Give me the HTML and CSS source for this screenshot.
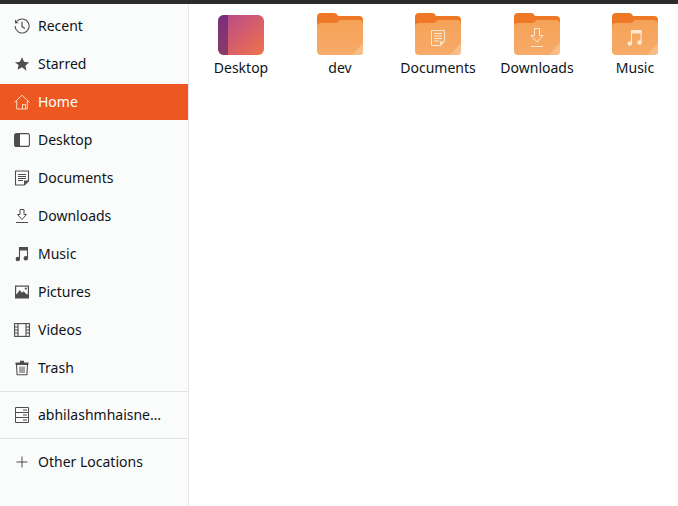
FILE: index.html
```html
<!DOCTYPE html>
<html lang="en">
<head>
<meta charset="utf-8">
<title>Files</title>
<link rel="stylesheet" href="styles.css">
</head>
<body>
<div class="topbar"></div>
<div class="window">
  <nav class="sidebar">
    <ul class="places">
      <li class="row"><svg class="ico" viewBox="0 0 16 16"><path d="M3 3.200A7 7 0 1 1 1.100 8" fill="none" stroke="#4d4d4d" stroke-width="1.100"/><path d="M1 1.600v3.600h3.600z" fill="#4d4d4d"/><path d="M8 3.800V8.600l3 1.800" fill="none" stroke="#4d4d4d" stroke-width="1.200"/></svg><span class="lbl">Recent</span></li>
      <li class="row"><svg class="ico" viewBox="0 0 16 16"><path d="M8 1.200l2.100 4.600 5 .6-3.700 3.400 1 5L8 11.300l-4.400 2.500 1-5L.9 6.400l5-.6z" fill="#4d4d4d"/></svg><span class="lbl">Starred</span></li>
      <li class="row active"><svg class="ico" viewBox="0 0 16 16"><path d="M.6 8.400L8 1.200l7.400 7.200M2.700 7v8h10.600V7M8.500 15v-4.500h3V15" fill="none" stroke="#fbd9c8" stroke-width="1"/></svg><span class="lbl">Home</span></li>
      <li class="row"><svg class="ico" viewBox="0 0 16 16"><rect x=".6" y="1.600" width="14.800" height="12.800" rx="2" fill="#fcfdfd" stroke="#4d4d4d" stroke-width="1.100"/><path d="M2.500 1.600h3.500v12.800H2.500a2 2 0 0 1-2-2V3.600a2 2 0 0 1 2-2z" fill="#4d4d4d"/></svg><span class="lbl">Desktop</span></li>
      <li class="row"><svg class="ico" viewBox="0 0 16 16"><path d="M1.500 1h13v10l-4 4h-9z" fill="none" stroke="#4d4d4d" stroke-width="1.100"/><path d="M4 4.500h8M4 6.500h8M4 8.500h8M4 10.500h5" stroke="#4d4d4d" stroke-width="1"/><path d="M10 15v-4.500h4.500z" fill="#4d4d4d"/></svg><span class="lbl">Documents</span></li>
      <li class="row"><svg class="ico" viewBox="0 0 16 16"><path d="M6 1.500h4v5h2.500L8 11.500 3.500 6.500H6z" fill="none" stroke="#4d4d4d" stroke-width="1"/><path d="M2 14.500h12" stroke="#4d4d4d" stroke-width="1"/></svg><span class="lbl">Downloads</span></li>
      <li class="row"><svg class="ico" viewBox="0 0 16 16"><path d="M5.500 12.500V3h8v9" fill="none" stroke="#4d4d4d" stroke-width="1.100"/><path d="M5 1h9v3.500H5z" fill="#4d4d4d"/><circle cx="3.800" cy="13" r="2.200" fill="#4d4d4d"/><circle cx="11.800" cy="12.300" r="2.200" fill="#4d4d4d"/></svg><span class="lbl">Music</span></li>
      <li class="row"><svg class="ico" viewBox="0 0 16 16"><rect x="1" y="1.500" width="14" height="13" fill="#4d4d4d"/><rect x="2.200" y="2.700" width="11.600" height="7.600" fill="#fcfdfd"/><path d="M2.200 11l3.500-5 2.300 2.700 1.500-1.500 3.800 3.800z" fill="#4d4d4d"/><circle cx="11.800" cy="4.600" r="1.100" fill="#4d4d4d"/></svg><span class="lbl">Pictures</span></li>
      <li class="row"><svg class="ico" viewBox="0 0 16 16"><rect x=".6" y="1.600" width="14.800" height="12.800" fill="none" stroke="#4d4d4d" stroke-width="1.100"/><path d="M4 1.600v12.800M12 1.600v12.800" stroke="#4d4d4d" stroke-width="1.100"/><path d="M.6 5h3.400M.6 8h3.400M.6 11h3.400M12 5h3.400M12 8h3.400M12 11h3.400" stroke="#4d4d4d" stroke-width="1"/></svg><span class="lbl">Videos</span></li>
      <li class="row"><svg class="ico" viewBox="0 0 16 16"><path d="M2.500 4.500l.6 10.200h9.800l.6-10.200z" fill="none" stroke="#4d4d4d" stroke-width="1.100"/><path d="M1.500 2.500h13v2h-13zM6 .8h4v2H6z" fill="#4d4d4d"/><path d="M6 6.500v6.500M8 6.500v6.500M10 6.500v6.500" stroke="#4d4d4d" stroke-width="1"/></svg><span class="lbl">Trash</span></li>
    </ul>
    <div class="mount">
      <div class="row"><svg class="ico" viewBox="0 0 16 16"><path d="M1.500 .5h13v5h-13zM1.500 5.500v5h13v-5M1.500 10.500v5h13v-5" fill="none" stroke="#4d4d4d" stroke-width="1"/><path d="M9 3h4M9 8h4M9 13h4" stroke="#4d4d4d" stroke-width="1"/></svg><span class="lbl">abhilashmhaisne…</span></div>
    </div>
    <div class="row other"><svg class="ico" viewBox="0 0 16 16"><path d="M8 2.500v11M2.500 8h11" stroke="#4d4d4d" stroke-width="1"/></svg><span class="lbl">Other Locations</span></div>
  </nav>
  <main class="grid">
    <figure class="item">
      <svg class="thumb desktop" viewBox="0 0 46 40"><defs><linearGradient id="dg" x1="0" y1="0" x2="1" y2="1"><stop offset="0" stop-color="#b5488f"/><stop offset="1" stop-color="#f0724a"/></linearGradient><linearGradient id="ds" x1="0" y1="0" x2="0" y2="1"><stop offset="0" stop-color="#7c2d7e"/><stop offset="1" stop-color="#8a3d66"/></linearGradient></defs><rect width="46" height="40" rx="6" fill="url(#dg)"/><path d="M6 0h4v40H6a6 6 0 0 1-6-6V6a6 6 0 0 1 6-6z" fill="url(#ds)"/></svg>
      <figcaption>Desktop</figcaption>
    </figure>
    <figure class="item">
      <svg class="thumb" viewBox="0 0 46 42"><use href="#folder"/></svg>
      <figcaption>dev</figcaption>
    </figure>
    <figure class="item">
      <svg class="thumb" viewBox="0 0 46 42"><use href="#folder"/><path d="M16.500 17.500h13v11l-4 4h-9z" fill="none" stroke="#fde9d5" stroke-width="1"/><path d="M19 20.500h8M19 23h8M19 25.500h8M19 28h5" stroke="#fde9d5" stroke-width="1"/><path d="M25 32.500v-4h4z" fill="#fde9d5"/></svg>
      <figcaption>Documents</figcaption>
    </figure>
    <figure class="item">
      <svg class="thumb" viewBox="0 0 46 42"><use href="#folder"/><path d="M20.500 15.500h5v7h3.500l-6 6.500-6-6.500h3.500z" fill="none" stroke="#fde9d5" stroke-width="1"/><path d="M17 33.500h12" stroke="#fde9d5" stroke-width="1"/></svg>
      <figcaption>Downloads</figcaption>
    </figure>
    <figure class="item">
      <svg class="thumb" viewBox="0 0 46 42"><use href="#folder"/><path d="M19.500 30V19h9.500v10" fill="none" stroke="#fde9d5" stroke-width="1.100"/><path d="M19 17h10.500v3.500H19z" fill="#fde9d5"/><circle cx="17.800" cy="30.500" r="2.300" fill="#fde9d5"/><circle cx="27.500" cy="29.500" r="2.300" fill="#fde9d5"/></svg>
      <figcaption>Music</figcaption>
    </figure>
  </main>
</div>
<svg class="defs" width="0" height="0"><defs>
  <linearGradient id="fb" x1="0" y1="0" x2="0" y2="1"><stop offset="0" stop-color="#f5a258"/><stop offset="1" stop-color="#f7ab68"/></linearGradient>
  <g id="folder">
    <path d="M4 0h13c2 0 3 1 4 3h21a4 4 0 0 1 4 4v8H0V4a4 4 0 0 1 4-4z" fill="#ee7826"/>
    <path d="M0 13c0-2 2-3 4-3h14c2 0 3-1 5-3h19a4 4 0 0 1 4 4v27a4 4 0 0 1-4 4H4a4 4 0 0 1-4-4z" fill="url(#fb)"/>
    <path d="M46 30v8a4 4 0 0 1-4 4h-7z" fill="#f8bd87"/>
  </g>
</defs></svg>
</body>
</html>
```

FILE: styles.css
```css
* { box-sizing: border-box; }
html, body { margin: 0; padding: 0; height: 100%; }
body {
  background: #fff;
  font-family: "Noto Sans", "Open Sans", sans-serif;
  font-size: 14px;
  color: #0f1419;
  overflow: hidden;
  display: flex;
  flex-direction: column;
}
.topbar { height: 4px; background: #2c2c2c; flex: none; }
.window { flex: 1; display: flex; min-height: 0; }
.sidebar {
  width: 189px;
  flex: none;
  background: #fafbfb;
  border-right: 1px solid #e4e4e4;
  padding-top: 4px;
}
.places { list-style: none; margin: 0; padding: 0; }
.row {
  height: 36px;
  margin-bottom: 2px;
  display: flex;
  align-items: center;
  padding-left: 14px;
  gap: 8px;
}
.row.active { background: #ec5722; color: #fff; }
.ico { width: 16px; height: 16px; flex: none; }
.lbl { white-space: nowrap; margin-bottom: 2px; }
.mount {
  border-top: 1px solid #e2e2e2;
  border-bottom: 1px solid #e2e2e2;
  margin-top: 5px;
  padding-top: 5px;
  height: 48px;
}
.other { margin-top: 5px; }
.grid { flex: 1; display: flex; padding: 9px 0 0 29px; min-width: 0; }
.item { margin: 0 0 0 52px; width: 46px; flex: none; display: flex; flex-direction: column; align-items: center; }
.item:first-child { margin-left: 0; }
.item:nth-child(even) { margin-left: 53px; }
.thumb { width: 46px; height: 42px; display: block; }
.thumb.desktop { height: 40px; margin-top: 2px; }
figcaption { margin-top: 3px; white-space: nowrap; line-height: 19px; }
.defs { position: absolute; }
```
